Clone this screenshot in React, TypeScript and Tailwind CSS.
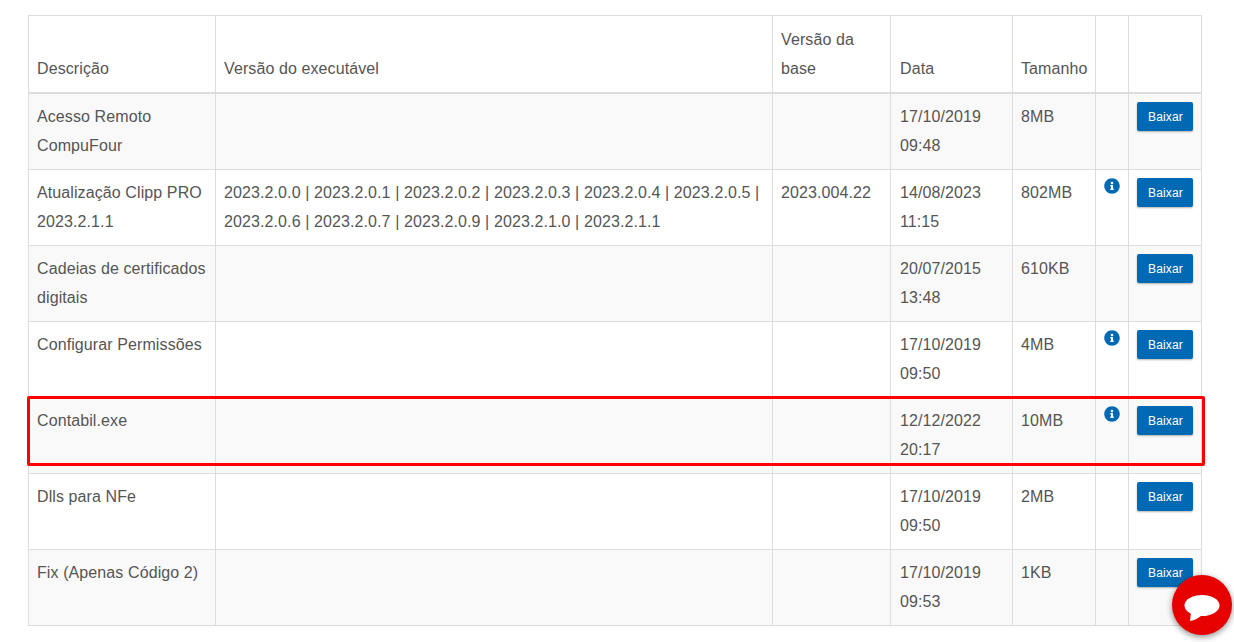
import { FaInfoCircle } from 'react-icons/fa';

type Row = {
    name: string;
    versions?: string;
    base?: string;
    date: string;
    time: string;
    size: string;
    info?: boolean;
};

const rows: Row[] = [
    { name: 'Acesso Remoto CompuFour', date: '17/10/2019', time: '09:48', size: '8MB' },
    {
        name: 'Atualização Clipp PRO 2023.2.1.1',
        versions: '2023.2.0.0 | 2023.2.0.1 | 2023.2.0.2 | 2023.2.0.3 | 2023.2.0.4 | 2023.2.0.5 | 2023.2.0.6 | 2023.2.0.7 | 2023.2.0.9 | 2023.2.1.0 | 2023.2.1.1',
        base: '2023.004.22',
        date: '14/08/2023',
        time: '11:15',
        size: '802MB',
        info: true,
    },
    { name: 'Cadeias de certificados digitais', date: '20/07/2015', time: '13:48', size: '610KB' },
    { name: 'Configurar Permissões', date: '17/10/2019', time: '09:50', size: '4MB', info: true },
    { name: 'Contabil.exe', date: '12/12/2022', time: '20:17', size: '10MB', info: true },
    { name: 'Dlls para NFe', date: '17/10/2019', time: '09:50', size: '2MB' },
    { name: 'Fix (Apenas Código 2)', date: '17/10/2019', time: '09:53', size: '1KB' },
];

const thClass = 'h-[77px] border border-[#ddd] border-b-2 px-2 pt-2 pb-[9px] text-left align-bottom font-normal';
const tdClass = 'border border-[#ddd] px-2 pt-2 pb-[9px] align-top';

export default function App() {
    return (
        <div className="relative h-[642px] overflow-hidden bg-white pt-[15px] pl-[28px] font-['Liberation_Sans',sans-serif] text-[16px] leading-[29px] tracking-[0.1px] text-[#555]">
            <table className="w-[1173px] table-fixed border-collapse">
                <colgroup>
                    <col className="w-[187px]" />
                    <col className="w-[557px]" />
                    <col className="w-[118px]" />
                    <col className="w-[122px]" />
                    <col className="w-[83px]" />
                    <col className="w-[33px]" />
                    <col className="w-[73px]" />
                </colgroup>
                <thead>
                    <tr>
                        <th className={thClass}>Descrição</th>
                        <th className={thClass}>Versão do executável</th>
                        <th className={thClass}>Versão da base</th>
                        <th className={`${thClass} pl-[9px]`}>Data</th>
                        <th className={thClass}>Tamanho</th>
                        <th className={thClass}></th>
                        <th className={thClass}></th>
                    </tr>
                </thead>
                <tbody>
                    {rows.map((row, i) => (
                        <tr key={row.name} className={i % 2 === 0 ? 'bg-[#f9f9f9]' : 'bg-white'}>
                            <td className={tdClass}>{row.name}</td>
                            <td className={tdClass}>{row.versions}</td>
                            <td className={tdClass}>{row.base}</td>
                            <td className={`${tdClass} pl-[9px]`}>
                                {row.date}
                                <br />
                                {row.time}
                            </td>
                            <td className={tdClass}>{row.size}</td>
                            <td className={tdClass}>
                                {row.info && <FaInfoCircle className="text-[16px] text-[#0069b4]" />}
                            </td>
                            <td className={tdClass}>
                                <button className="block h-[29px] w-[56px] rounded-[2px] bg-[#0069b4] pt-px pl-px text-[12px] leading-[28px] tracking-[0.15px] text-white shadow-[0_1px_2px_rgba(0,0,0,0.3)]">
                                    Baixar
                                </button>
                            </td>
                        </tr>
                    ))}
                </tbody>
            </table>

            {/* Red highlight drawn over the Contabil row */}
            <div className="absolute top-[396px] left-[27px] h-[70px] w-[1178px] rounded-[2px] border-[3px] border-[#ff0000]" />

            {/* Chat button */}
            <div className="absolute top-[575px] left-[1172px] flex h-[60px] w-[60px] items-center justify-center rounded-full bg-[#e60000] shadow-[0_2px_6px_rgba(0,0,0,0.45)]">
                <svg className="mt-[6px]" width="36" height="26" viewBox="0 0 36 26">
                    <ellipse cx="18" cy="10.5" rx="17.5" ry="10.5" fill="#fff" />
                    <path d="M7 17 L6 26 Q13 25 18 20 Z" fill="#fff" />
                </svg>
            </div>
        </div>
    );
}
